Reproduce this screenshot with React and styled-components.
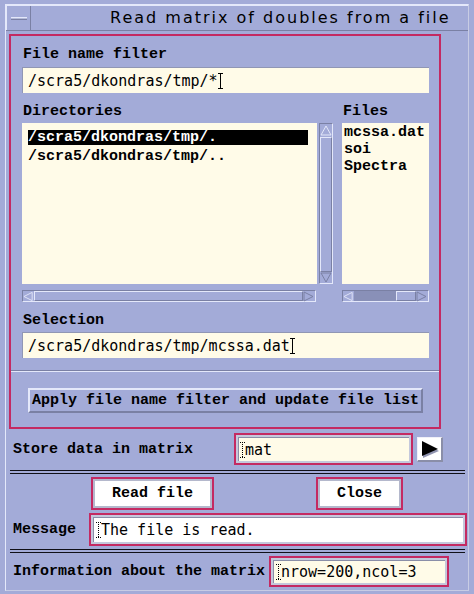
import React from "react";
import styled, { createGlobalStyle } from "styled-components";

const BG = "#a3abd8";
const CRIMSON = "#c42a62";
const CREAM = "#fffbe8";
const LIGHT = "#e4e8fa";
const SHADE = "#7a80a4";
const TROUGH = "#8990b8";

const GlobalStyle = createGlobalStyle`
  html, body {
    margin: 0;
    padding: 0;
    background: ${BG};
  }
  * {
    box-sizing: border-box;
  }
`;

const Window = styled.div`
  width: 474px;
  height: 594px;
  padding: 4px 5px 3px 5px;
  background: ${BG};
`;

const Inner = styled.div`
  height: 100%;
  border: 1px solid ${LIGHT};
  border-right-color: #c8cce4;
  border-bottom-color: #c8cce4;
  display: flex;
  flex-direction: column;
`;

const TitleBar = styled.div`
  height: 26px;
  display: flex;
  border-bottom: 1px solid ${SHADE};
  border-top: 1px solid ${LIGHT};
`;

const MenuBox = styled.div`
  width: 25px;
  display: flex;
  align-items: center;
  justify-content: center;
  border-left: 1px solid ${LIGHT};
  border-right: 1px solid ${SHADE};
`;

const Dash = styled.div`
  width: 16px;
  height: 3px;
  border-top: 1px solid ${LIGHT};
  border-bottom: 1px solid ${SHADE};
  background: #b4bad8;
`;

const Title = styled.div`
  flex: 1;
  padding-left: 79px;
  font: 16px "DejaVu Sans", sans-serif;
  letter-spacing: 2px;
  line-height: 24px;
  color: #000;
  white-space: nowrap;
`;

const Frame = styled.div`
  width: 432px;
  height: 395px;
  margin: 3px 0 0 3px;
  border: 2px solid ${CRIMSON};
  padding: 10px 10px 0 11px;
  display: flex;
  flex-direction: column;
`;

const Label = styled.div`
  font: bold 15px "Liberation Mono", monospace;
  line-height: 17px;
  color: #000;
  white-space: nowrap;
  margin-top: ${p => p.$top || 0}px;
  padding-left: 1px;
  ${p => p.$width && `width: ${p.$width}px; flex: none;`}
`;

const Field = styled.div`
  height: 26px;
  margin-top: ${p => p.$top || 0}px;
  background: ${CREAM};
  border-top: 1px solid #9096b4;
  border-left: 1px solid #9096b4;
  padding-left: 5px;
  display: flex;
  align-items: center;
  font: 15px "DejaVu Sans Mono", monospace;
  color: #000;
  white-space: nowrap;
`;

const ListsRow = styled.div`
  display: flex;
  margin-top: 10px;
`;

const DirColumn = styled.div`
  width: 311px;
  display: flex;
  flex-direction: column;
`;

const FilesColumn = styled.div`
  width: 87px;
  margin-left: 9px;
  display: flex;
  flex-direction: column;
`;

const ListArea = styled.div`
  display: flex;
  margin-top: 3px;
  height: 161px;
`;

const ListBox = styled.div`
  flex: 1;
  background: ${CREAM};
  padding: ${p => p.$padTop}px ${p => p.$padRight}px 0 ${p => p.$padLeft}px;
  font: bold 15px "Liberation Mono", monospace;
`;

const ListItem = styled.div`
  line-height: ${p => p.$line}px;
  margin-bottom: ${p => p.$gap || 0}px;
  background: ${p => (p.$selected ? "#000" : "transparent")};
  color: ${p => (p.$selected ? "#fff" : "#000")};
  white-space: nowrap;
`;

const VScroll = styled.div`
  width: 14px;
  margin-left: 2px;
  border: 1px solid ${SHADE};
  border-right-color: ${LIGHT};
  border-bottom-color: ${LIGHT};
  display: flex;
  flex-direction: column;
`;

const HScroll = styled.div`
  height: 12px;
  margin-top: 6px;
  width: ${p => p.$width}px;
  border: 1px solid ${SHADE};
  border-right-color: ${LIGHT};
  border-bottom-color: ${LIGHT};
  display: flex;
`;

const Trough = styled.div`
  flex: 1;
  display: flex;
  background: ${p => (p.$dark ? TROUGH : BG)};
  flex-direction: ${p => (p.$vertical ? "column" : "row")};
`;

const Thumb = styled.div`
  ${p => (p.$size ? `width: ${p.$size}px; margin-left: auto;` : "flex: 1;")}
  background: ${BG};
  border-top: 1px solid ${LIGHT};
  border-left: 1px solid ${LIGHT};
  border-right: 1px solid ${SHADE};
  border-bottom: 1px solid ${SHADE};
`;

const ArrowBox = styled.div`
  flex: none;
  width: ${p => p.$w}px;
  height: ${p => p.$h}px;
  display: flex;
  align-items: center;
  justify-content: center;
`;

const Separator = styled.div`
  margin: 12px -10px 0 -11px;
  height: 2px;
  border-top: 1px solid ${SHADE};
  border-bottom: 1px solid ${LIGHT};
`;

const ApplyButton = styled.div`
  margin: 16px 0 0 6px;
  width: 395px;
  height: 25px;
  border: 2px solid ${LIGHT};
  border-right-color: ${SHADE};
  border-bottom-color: ${SHADE};
  display: flex;
  align-items: center;
  justify-content: center;
  font: bold 15px "Liberation Mono", monospace;
  color: #000;
  white-space: nowrap;
`;

const FormRow = styled.div`
  display: flex;
  align-items: center;
  height: ${p => p.$height}px;
  margin-top: ${p => p.$top}px;
  padding-left: 6px;
`;

const BoxedField = styled.div`
  width: ${p => p.$width}px;
  height: 100%;
  border: 2px solid ${CRIMSON};
  padding: 2px;
  background: #c4c8dc;
  display: flex;
`;

const BoxedInner = styled.div`
  flex: 1;
  background: ${p => (p.$white ? "#fff" : CREAM)};
  border-top: 1px solid #8a8ea8;
  border-left: 1px solid #8a8ea8;
  padding-left: ${p => p.$pad || 1}px;
  display: flex;
  align-items: center;
  font: 15px "DejaVu Sans Mono", monospace;
  color: #000;
  white-space: nowrap;
`;

const ArrowButton = styled.div`
  width: 26px;
  height: 25px;
  margin-left: 4px;
  background: #fff;
  border-top: 1px solid #f0f0f8;
  border-left: 1px solid #f0f0f8;
  border-right: 2px solid #8a8ea8;
  border-bottom: 2px solid #8a8ea8;
  display: flex;
  align-items: center;
  justify-content: center;
`;

const DoubleRule = styled.div`
  width: 455px;
  height: 4px;
  margin: ${p => p.$top}px 0 0 4px;
  border-top: 1px solid #101018;
  border-bottom: 1px solid #101018;
`;

const ButtonRow = styled.div`
  display: flex;
  height: 33px;
  margin-top: 3px;
  padding-left: 85px;
  gap: 102px;
`;

const PushButton = styled.div`
  width: ${p => p.$width}px;
  height: 100%;
  border: 2px solid ${CRIMSON};
  padding: 2px;
  background: #b4b8cc;
  display: flex;
`;

const PushFace = styled.div`
  flex: 1;
  background: #fff;
  display: flex;
  align-items: center;
  justify-content: center;
  font: bold 15px "Liberation Mono", monospace;
  color: #000;
`;

const Caret = ({ dotted }) => (
  <svg width="5" height="16" viewBox="0 0 5 16" style={{ flex: "none" }}>
    <g stroke="#000" strokeWidth="1" strokeDasharray={dotted ? "1 1" : undefined}>
      <line x1="0" y1="0.5" x2="5" y2="0.5" />
      <line x1="2.5" y1="0" x2="2.5" y2="16" />
      <line x1="0" y1="15.5" x2="5" y2="15.5" />
    </g>
  </svg>
);

const pointsFor = dir => {
  switch (dir) {
    case "up":
      return "6,1 11,10 1,10";
    case "down":
      return "1,1 11,1 6,10";
    case "left":
      return "1,5.5 10,1 10,10";
    default:
      return "1,1 10,5.5 1,10";
  }
};

const ScrollArrow = ({ dir, w, h }) => (
  <ArrowBox $w={w} $h={h}>
    <svg width="12" height="11" viewBox="0 0 12 11">
      <polygon
        points={pointsFor(dir)}
        fill={BG}
        stroke={dir === "down" || dir === "right" ? SHADE : LIGHT}
        strokeWidth="1"
      />
    </svg>
  </ArrowBox>
);

const PlayArrow = () => (
  <svg width="20" height="20" viewBox="0 0 20 20">
    <polygon points="3,4 19,12 3,19" fill="#9094b0" />
    <polygon points="2,2 18,10 2,17" fill="#000" />
  </svg>
);

const App = () => {
  return (
    <>
      <GlobalStyle />
      <Window>
        <Inner>
          <TitleBar>
            <MenuBox>
              <Dash />
            </MenuBox>
            <Title>Read matrix of doubles from a file</Title>
          </TitleBar>

          <Frame>
            <Label>File name filter</Label>
            <Field $top={4}>
              /scra5/dkondras/tmp/*
              <Caret />
            </Field>

            <ListsRow>
              <DirColumn>
                <Label>Directories</Label>
                <ListArea>
                  <ListBox $padTop={7} $padLeft={6} $padRight={9}>
                    <ListItem $line={15} $gap={4} $selected>
                      /scra5/dkondras/tmp/.
                    </ListItem>
                    <ListItem $line={15}>/scra5/dkondras/tmp/..</ListItem>
                  </ListBox>
                  <VScroll>
                    <ScrollArrow dir="up" w={12} h={13} />
                    <Trough $vertical>
                      <Thumb />
                    </Trough>
                    <ScrollArrow dir="down" w={12} h={11} />
                  </VScroll>
                </ListArea>
                <HScroll $width={294}>
                  <ScrollArrow dir="left" w={11} h={10} />
                  <Trough>
                    <Thumb />
                  </Trough>
                  <ScrollArrow dir="right" w={12} h={10} />
                </HScroll>
              </DirColumn>

              <FilesColumn>
                <Label>Files</Label>
                <ListArea>
                  <ListBox $padTop={1} $padLeft={2} $padRight={0}>
                    <ListItem $line={17}>mcssa.dat</ListItem>
                    <ListItem $line={17}>soi</ListItem>
                    <ListItem $line={17}>Spectra</ListItem>
                  </ListBox>
                </ListArea>
                <HScroll $width={87}>
                  <ScrollArrow dir="left" w={11} h={10} />
                  <Trough $dark>
                    <Thumb $size={20} />
                  </Trough>
                  <ScrollArrow dir="right" w={12} h={10} />
                </HScroll>
              </FilesColumn>
            </ListsRow>

            <Label $top={10}>Selection</Label>
            <Field $top={3}>
              /scra5/dkondras/tmp/mcssa.dat
              <Caret />
            </Field>

            <Separator />
            <ApplyButton>Apply file name filter and update file list</ApplyButton>
          </Frame>

          <FormRow $height={32} $top={4}>
            <Label $width={222}>Store data in matrix</Label>
            <BoxedField $width={179}>
              <BoxedInner>
                <Caret dotted />
                mat
              </BoxedInner>
            </BoxedField>
            <ArrowButton>
              <PlayArrow />
            </ArrowButton>
          </FormRow>

          <DoubleRule $top={5} />

          <ButtonRow>
            <PushButton $width={123}>
              <PushFace>Read file</PushFace>
            </PushButton>
            <PushButton $width={87}>
              <PushFace>Close</PushFace>
            </PushButton>
          </ButtonRow>

          <FormRow $height={33} $top={3}>
            <Label $width={77}>Message</Label>
            <BoxedField $width={378}>
              <BoxedInner $white $pad={2}>
                <Caret dotted />
                The file is read.
              </BoxedInner>
            </BoxedField>
          </FormRow>

          <DoubleRule $top={3} />

          <FormRow $height={31} $top={3}>
            <Label $width={257}>Information about the matrix</Label>
            <BoxedField $width={180}>
              <BoxedInner $pad={2}>
                <Caret dotted />
                nrow=200,ncol=3
              </BoxedInner>
            </BoxedField>
          </FormRow>
        </Inner>
      </Window>
    </>
  );
};

export default App;
